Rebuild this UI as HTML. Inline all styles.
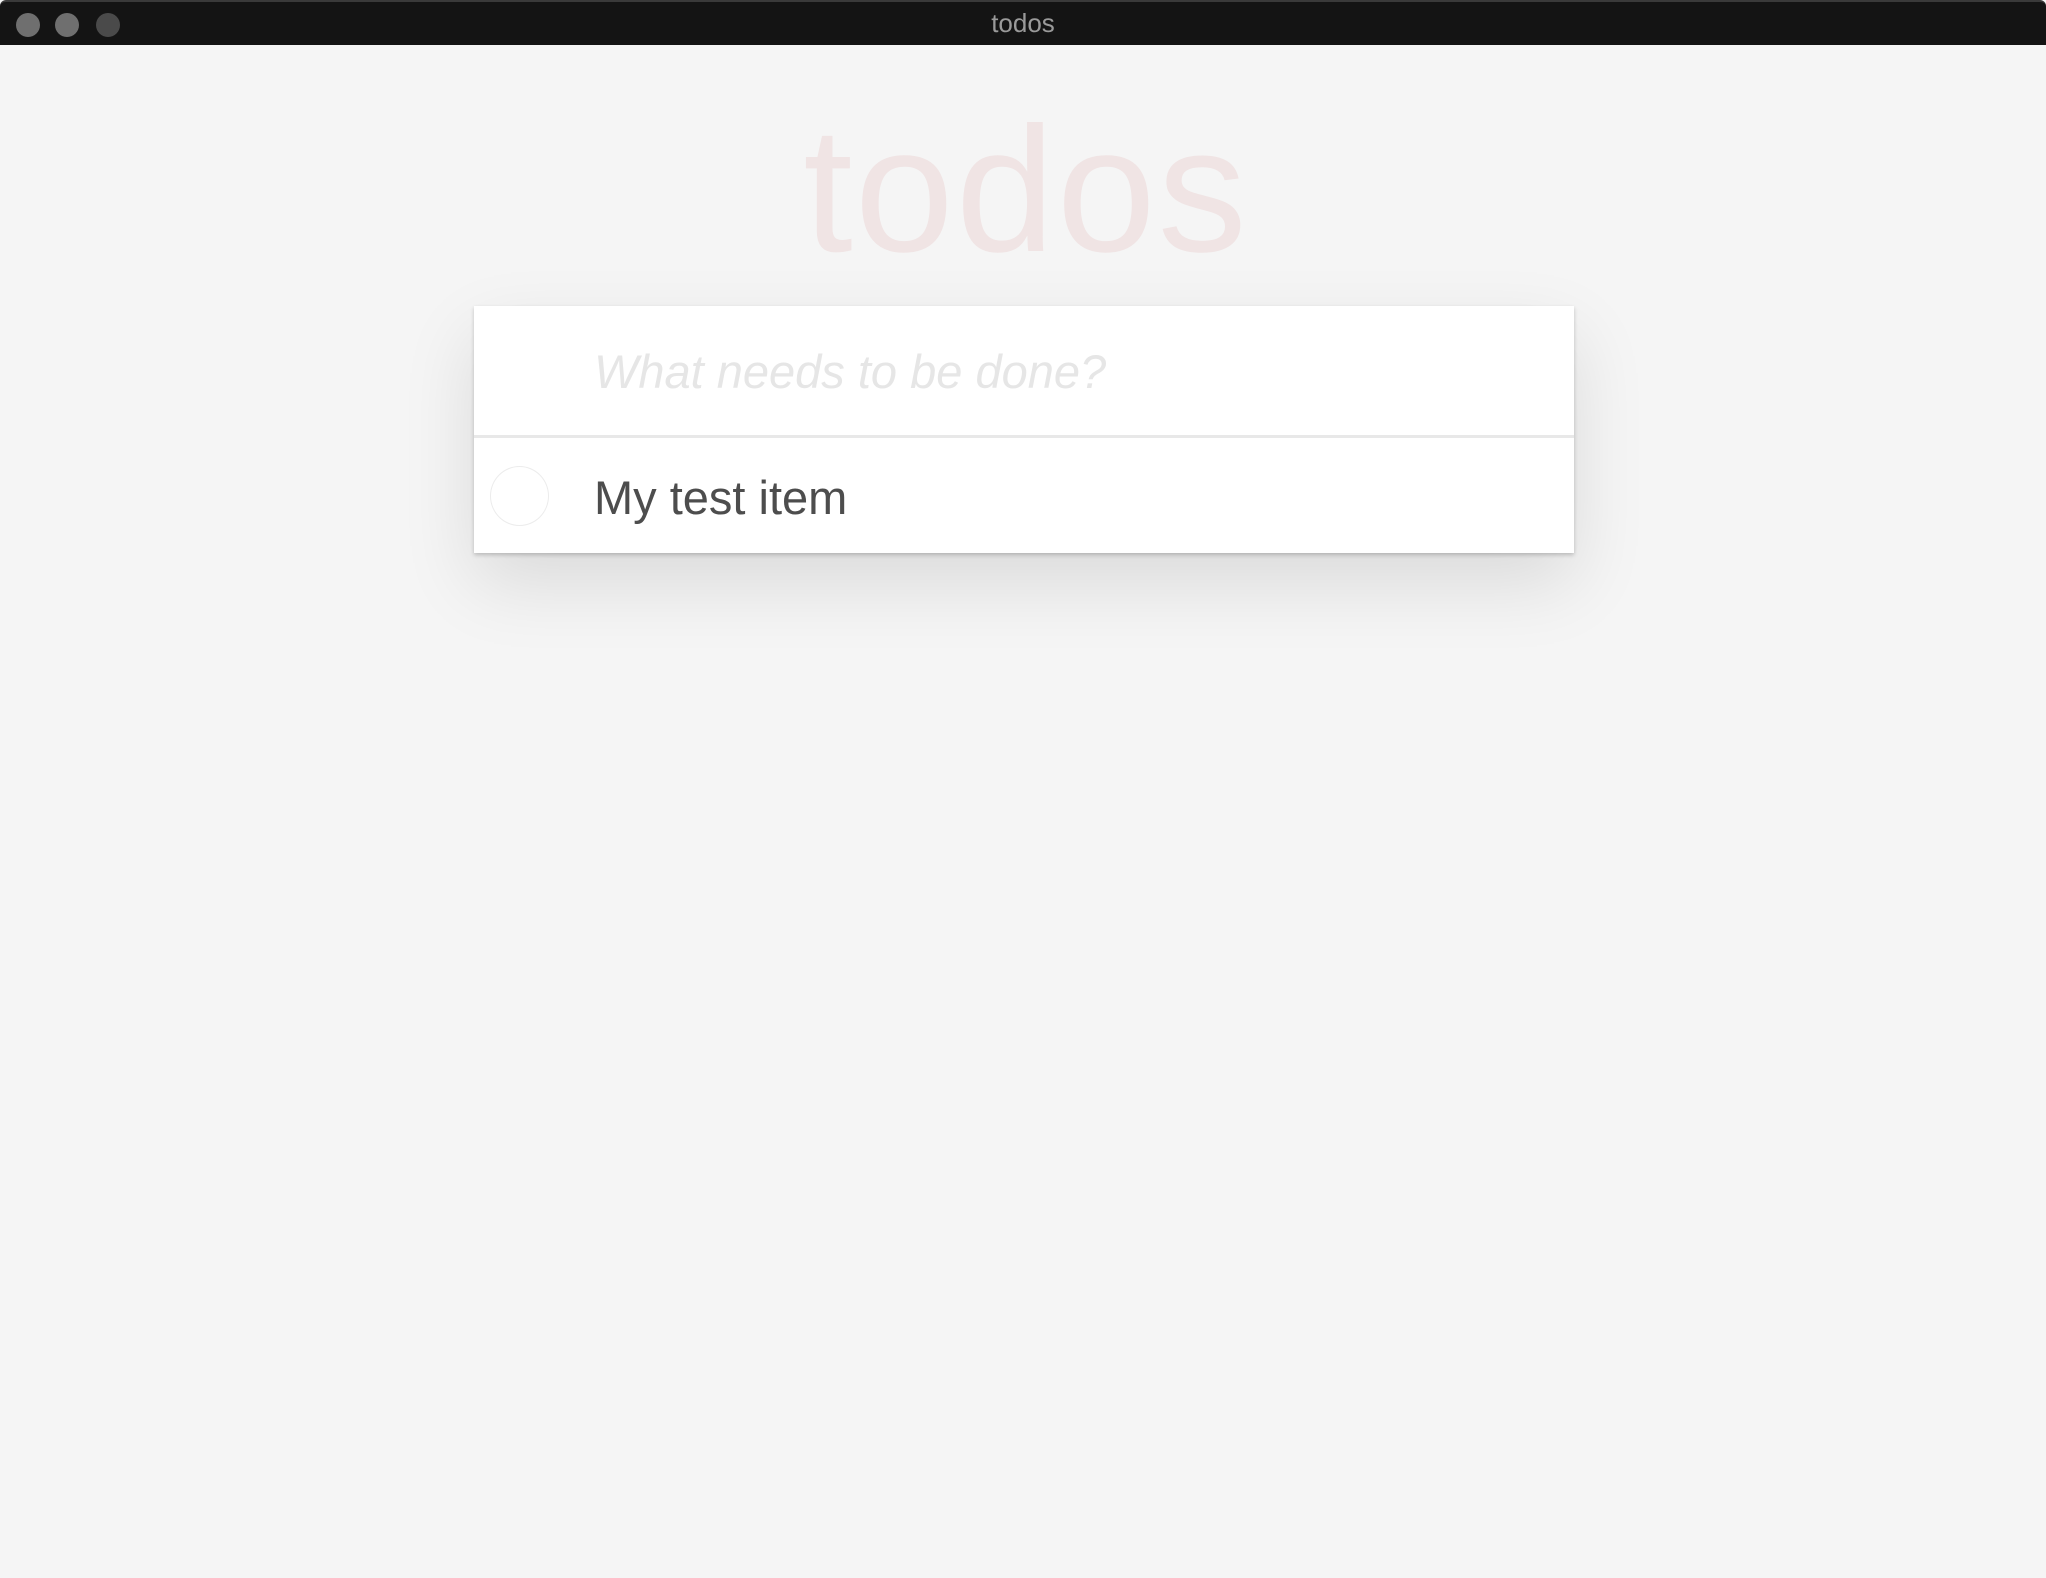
<!DOCTYPE html>
<html><head><meta charset="utf-8"><style>
html,body{margin:0;padding:0;}
body{width:2046px;height:1578px;background:#f5f5f5;position:relative;overflow:hidden;font-family:"Liberation Sans",Helvetica,Arial,sans-serif;}
.bar{position:absolute;left:0;top:0;width:2046px;height:45px;background:#141414;border-top:2px solid #3a3a3a;box-sizing:border-box;border-radius:6px 6px 0 0;}
.dot{position:absolute;top:11px;width:24px;height:24px;border-radius:50%;}
.title{position:absolute;left:0;width:2046px;top:6px;text-align:center;color:#9a9a9a;font-size:26px;line-height:30px;}
.h1{position:absolute;left:3px;width:2046px;top:101px;text-align:center;font-size:178px;line-height:178px;font-weight:100;color:#f0e4e4;letter-spacing:2px;}
.card{position:absolute;left:474px;top:306px;width:1100px;height:247px;background:#fff;box-shadow:0 2px 4px rgba(0,0,0,0.2),0 30px 70px rgba(0,0,0,0.11);}
.div{position:absolute;left:0;top:129px;width:1100px;height:3px;background:#e8e8e8;}
.ph{position:absolute;left:120px;top:38px;font-size:47px;line-height:56px;font-style:italic;color:#e6e6e6;font-weight:300;}
.item{position:absolute;left:120px;top:164px;font-size:47px;line-height:56px;color:#4d4d4d;}
.chk{position:absolute;left:16px;top:160px;width:59px;height:60px;border:1.5px solid #ececec;border-radius:50%;box-sizing:border-box;}
</style></head><body>
<div class="bar">
<div class="dot" style="left:16px;background:#6f6f6f"></div>
<div class="dot" style="left:55px;background:#6f6f6f"></div>
<div class="dot" style="left:96px;background:#4a4a4a"></div>
<div class="title">todos</div>
</div>
<div class="h1">todos</div>
<div class="card">
<div class="ph">What needs to be done?</div>
<div class="div"></div>
<div class="chk"></div>
<div class="item">My test item</div>
</div>
</body></html>
